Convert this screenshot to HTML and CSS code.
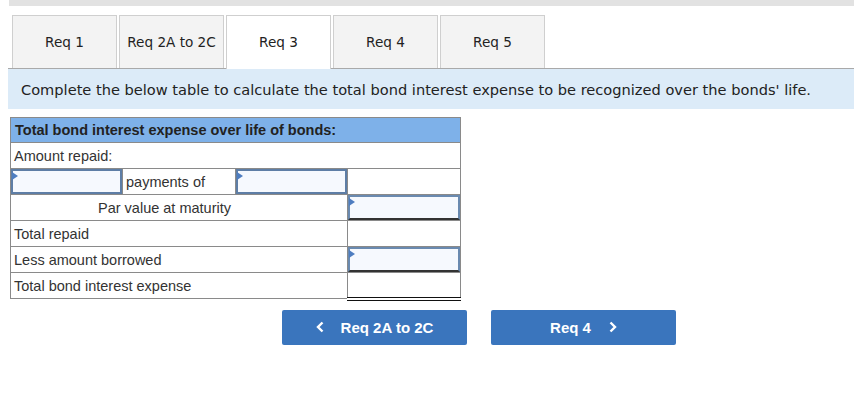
FILE: index.html
```html
<!DOCTYPE html>
<html lang="en">
<head>
    <title>Req 3</title>
    <meta name="viewport" content="width=device-width, initial-scale=1.0">
    <link rel="stylesheet" href="styles.css">
</head>
<body>
    <div class="topbar"></div>
    <div class="tabs">
        <div class="tab">Req 1</div>
        <div class="tab">Req 2A to 2C</div>
        <div class="tab active">Req 3</div>
        <div class="tab">Req 4</div>
        <div class="tab">Req 5</div>
    </div>
    <div class="prompt">Complete the below table to calculate the total bond interest expense to be recognized over the bonds' life.</div>

    <table class="sheet">
        <colgroup>
            <col class="c1"><col class="c2"><col class="c3"><col class="c4">
        </colgroup>
        <tr>
            <th colspan="4">Total bond interest expense over life of bonds:</th>
        </tr>
        <tr>
            <td colspan="4">Amount repaid:</td>
        </tr>
        <tr>
            <td class="entry"><div class="box"></div></td>
            <td class="label">payments of</td>
            <td class="entry"><div class="box"></div></td>
            <td></td>
        </tr>
        <tr>
            <td colspan="3" class="indent">Par value at maturity</td>
            <td class="entry"><div class="box under"></div></td>
        </tr>
        <tr>
            <td colspan="3">Total repaid</td>
            <td></td>
        </tr>
        <tr>
            <td colspan="3">Less amount borrowed</td>
            <td class="entry"><div class="box under"></div></td>
        </tr>
        <tr>
            <td colspan="3">Total bond interest expense</td>
            <td class="total"></td>
        </tr>
    </table>

    <div class="nav">
        <button class="navBtn">
            <svg class="chev" width="8" height="12" viewBox="0 0 8 12"><path d="M6.5 1.5 L2 6 L6.5 10.5" fill="none" stroke="#fff" stroke-width="2.4"/></svg>
            Req 2A to 2C
        </button>
        <button class="navBtn">
            Req 4
            <svg class="chev right" width="8" height="12" viewBox="0 0 8 12"><path d="M1.5 1.5 L6 6 L1.5 10.5" fill="none" stroke="#fff" stroke-width="2.4"/></svg>
        </button>
    </div>
</body>
</html>
```

FILE: styles.css
```css
*{
    margin:0;
    padding:0;
    box-sizing:border-box;
}
body{
    background-color:#fff;
    font-family:"Liberation Sans", Arial, sans-serif;
    color:#222;
}
.topbar{
    height:6px;
    margin-left:9px;
    background-color:#e2e2e2;
}
/* tabs */
.tabs{
    display:flex;
    gap:2px;
    margin-left:12px;
    margin-top:9px;
}
.tab{
    width:105px;
    height:53px;
    border:1px solid #cfcfcf;
    border-bottom:none;
    background-color:#f3f3f3;
    font-family:"DejaVu Sans", Verdana, sans-serif;
    font-size:13.6px;
    color:#222;
    display:flex;
    align-items:center;
    justify-content:center;
}
.tab.active{
    background-color:#fff;
    height:54px;
    padding-bottom:1px;
    margin-bottom:-1px;
    position:relative;
}
.prompt{
    margin-left:8px;
    height:41px;
    border-top:1px solid #a9a9a9;
    background-color:#dcebf8;
    padding-left:13px;
    font-family:"DejaVu Sans", Verdana, sans-serif;
    font-size:14.6px;
    color:#222;
    display:flex;
    align-items:center;
}
/* table */
.sheet{
    margin-left:10px;
    margin-top:8px;
    width:450px;
    border-collapse:collapse;
    table-layout:fixed;
    font-size:14.5px;
}
.c1{width:112px;}
.c2{width:113px;}
.c3{width:112px;}
.c4{width:113px;}
.sheet th{
    background-color:#7eb1e9;
    text-align:left;
    font-weight:bold;
    height:25px;
    padding:0 4px;
    border:1px solid #8a8a8a;
}
.sheet td{
    height:26px;
    padding:0 3px;
    border:1px solid #8a8a8a;
    color:#333;
}
.sheet td.indent{
    padding-left:87px;
}
.sheet td.entry{
    padding:0;
    position:relative;
}
.box{
    height:25px;
    border:2px solid #5e7ea6;
    background-color:#f6f9fe;
    position:relative;
}
.box::before{
    content:"";
    position:absolute;
    left:-1px;
    top:1px;
    border-left:6px solid #4e7dc0;
    border-top:4px solid transparent;
    border-bottom:4px solid transparent;
}
.box.under{
    border-color:#6a8ab0;
    border-bottom:2px solid #333;
}
.sheet td.total{
    border-bottom:4px double #111;
}
/* nav buttons */
.nav{
    display:flex;
    gap:24px;
    margin-left:282px;
    margin-top:9px;
}
.navBtn{
    width:185px;
    height:35px;
    border:none;
    border-radius:2px;
    background-color:#3a75bd;
    color:#fff;
    font-family:"Liberation Sans", Arial, sans-serif;
    font-size:15px;
    font-weight:bold;
    display:flex;
    align-items:center;
    justify-content:center;
}
.chev{
    margin-right:17px;
}
.chev.right{
    margin-right:0;
    margin-left:18px;
}
```
